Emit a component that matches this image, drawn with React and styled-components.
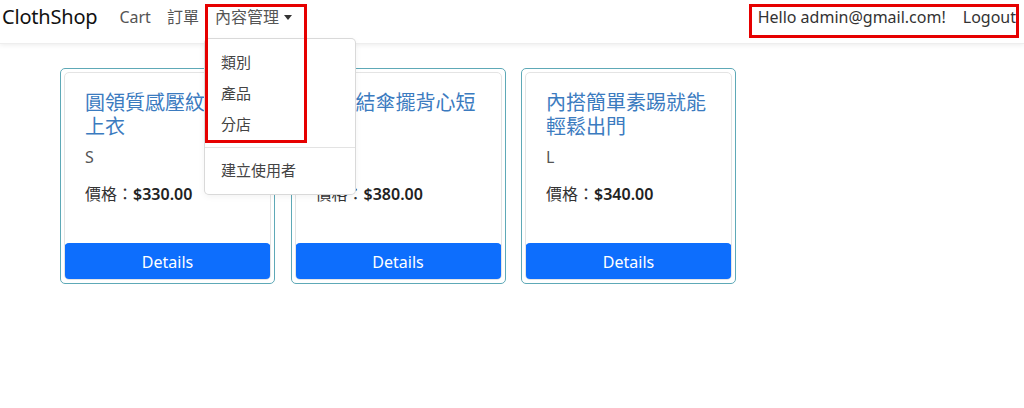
import React from 'react';
import styled, { createGlobalStyle } from 'styled-components';

const GlobalStyle = createGlobalStyle`
  * { box-sizing: border-box; }
  body {
    margin: 0;
    background: #fff;
    font-family: "Noto Sans", "Noto Sans CJK TC", sans-serif;
    color: #212529;
  }
`;

const products = [
  { id: 1, title: '圓領質感壓紋短袖上衣', size: 'S', price: '330.00' },
  { id: 2, title: '蝴蝶結傘擺背心短版', size: 'M', price: '380.00' },
  { id: 3, title: '內搭簡單素踢就能輕鬆出門', size: 'L', price: '340.00' },
];

const App = () => {
  return (
    <Page>
      <GlobalStyle />
      <Navbar>
        <Brand>ClothShop</Brand>
        <NavList>
          <NavLink>Cart</NavLink>
          <NavLink>訂單</NavLink>
          <DropdownWrap>
            <NavLink>
              內容管理<Caret />
            </NavLink>
            <DropdownMenu>
              <DropdownItem>類別</DropdownItem>
              <DropdownItem>產品</DropdownItem>
              <DropdownItem>分店</DropdownItem>
              <Divider />
              <DropdownItem>建立使用者</DropdownItem>
            </DropdownMenu>
            <Highlight $left={-2} $top={4} $width={102} $height={139} />
          </DropdownWrap>
        </NavList>
        <UserArea>
          <NavLink $dark>Hello admin@gmail.com!</NavLink>
          <NavLink $dark>Logout</NavLink>
          <Highlight $left={-1} $top={4} $width={270} $height={34} />
        </UserArea>
      </Navbar>

      <CardGrid>
        {products.map((p) => (
          <CardFrame key={p.id}>
            <Card>
              <CardBody>
                <CardTitle>{p.title}</CardTitle>
                <SizeText>{p.size}</SizeText>
                <PriceText>
                  價格：<strong>${p.price}</strong>
                </PriceText>
              </CardBody>
              <DetailsButton>Details</DetailsButton>
            </Card>
          </CardFrame>
        ))}
      </CardGrid>
    </Page>
  );
};

const Page = styled.div`
  min-height: 408px;
  background: #fff;
`;

const Navbar = styled.nav`
  position: relative;
  z-index: 5;
  display: flex;
  align-items: flex-start;
  height: 44px;
  padding: 4px 0 0 2px;
  background: #fff;
  box-shadow: 0 1px 5px rgba(0, 0, 0, 0.08);
  border-bottom: 1px solid #eee;
`;

const Brand = styled.a`
  font-size: 20px;
  line-height: 26px;
  color: #111;
  margin-right: 14px;
  letter-spacing: -0.2px;
`;

const NavList = styled.div`
  display: flex;
`;

const NavLink = styled.a`
  display: inline-flex;
  align-items: center;
  font-size: 16px;
  line-height: 26px;
  padding: 0 8px;
  color: ${(p) => (p.$dark ? '#333' : '#555')};
  cursor: pointer;
  white-space: nowrap;
`;

const Caret = styled.span`
  display: inline-block;
  margin-left: 5px;
  border-top: 5px solid #333;
  border-left: 4px solid transparent;
  border-right: 4px solid transparent;
`;

const DropdownWrap = styled.div`
  position: relative;
`;

const DropdownMenu = styled.div`
  position: absolute;
  top: 34px;
  left: -3px;
  width: 152px;
  padding: 8px 0;
  background: #fff;
  border: 1px solid rgba(0, 0, 0, 0.15);
  border-radius: 5px;
  box-shadow: 0 2px 6px rgba(0, 0, 0, 0.05);
`;

const DropdownItem = styled.div`
  font-size: 15px;
  line-height: 31px;
  padding: 0 16px;
  color: #444;
`;

const Divider = styled.hr`
  margin: 7px 0;
  border: 0;
  border-top: 1px solid #e3e3e3;
`;

const Highlight = styled.div`
  position: absolute;
  left: ${(p) => p.$left}px;
  top: ${(p) => p.$top - 4}px;
  width: ${(p) => p.$width}px;
  height: ${(p) => p.$height}px;
  border: 3px solid #e60000;
  pointer-events: none;
`;

const UserArea = styled.div`
  position: relative;
  display: flex;
  margin-left: auto;
  gap: 1px;
`;

const CardGrid = styled.div`
  display: grid;
  grid-template-columns: repeat(3, 215px);
  column-gap: 15.5px;
  padding: 24px 0 0 60px;
`;

const CardFrame = styled.div`
  border: 1px solid #5ea9b7;
  border-radius: 5px;
  padding: 3px;
  height: 216px;
  display: flex;
`;

const Card = styled.div`
  flex: 1;
  display: flex;
  flex-direction: column;
  border: 1px solid #e4e4e4;
  border-radius: 5px;
  overflow: hidden;
`;

const CardBody = styled.div`
  flex: 1;
  padding: 18px 20px 0 20px;
`;

const CardTitle = styled.h5`
  margin: 0;
  font-size: 20px;
  font-weight: 400;
  line-height: 24px;
  color: #3b7bbf;
  max-width: 164px;
`;

const SizeText = styled.p`
  margin: 6px 0 0;
  font-size: 16px;
  line-height: 24px;
  color: #555;
`;

const PriceText = styled.p`
  margin: 13px 0 0;
  font-size: 16px;
  line-height: 24px;
  color: #333;

  strong {
    font-weight: 600;
    color: #222;
  }
`;

const DetailsButton = styled.button`
  margin: 0 -1px -1px;
  height: 37px;
  border: 0;
  border-radius: 5px;
  background: #0d6efd;
  color: #fff;
  font-family: inherit;
  font-size: 16px;
  cursor: pointer;
`;

export default App;
